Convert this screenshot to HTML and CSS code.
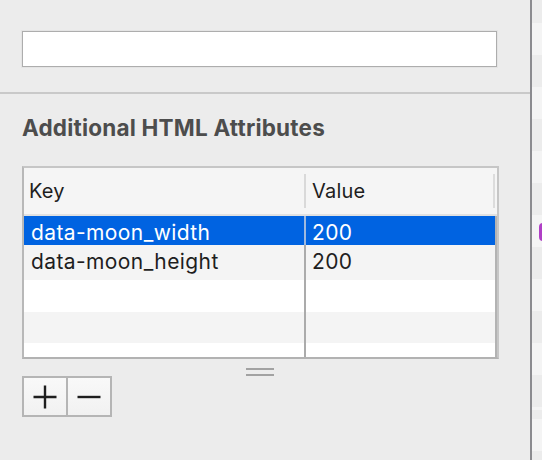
FILE: index.html
```html
<!DOCTYPE html>
<html>
<head>
<meta charset="utf-8">
<link rel="stylesheet" href="styles.css">
</head>
<body>
<div class="app">
  <div class="panel">
    <section class="top">
      <div class="field"></div>
    </section>
    <section class="attrs">
      <h2 class="title">Additional HTML Attributes</h2>
      <div class="table">
        <div class="thead">
          <div class="th key">Key</div>
          <div class="th val">Value</div>
          <div class="th-end"></div>
        </div>
        <div class="tbody">
          <div class="row r1 selected"><div class="cell key">data-moon_width</div><div class="cell val">200</div></div>
          <div class="row r2 alt"><div class="cell key">data-moon_height</div><div class="cell val">200</div></div>
          <div class="row r3"><div class="cell key"></div><div class="cell val"></div></div>
          <div class="row r4 alt"><div class="cell key"></div><div class="cell val"></div></div>
          <div class="row r5"><div class="cell key"></div><div class="cell val"></div></div>
        </div>
      </div>
      <div class="handle"><span></span><span></span></div>
      <div class="seg">
        <div class="btn">
          <svg width="24" height="24" viewBox="0 0 24 24"><path d="M12 0.5V23.5M0.5 12H23.5" stroke="#1e1e1e" stroke-width="2.4" fill="none"/></svg>
        </div>
        <div class="btn">
          <svg width="24" height="24" viewBox="0 0 24 24"><path d="M0.5 12H23.5" stroke="#1e1e1e" stroke-width="2.4" fill="none"/></svg>
        </div>
      </div>
    </section>
  </div>
  <div class="vline"></div>
  <div class="strip"><div class="badge"></div></div>
</div>
</body>
</html>
```

FILE: styles.css
```css
html, body {
  margin: 0;
  padding: 0;
  background: #ececec;
}
body {
  font-family: Inter, "Liberation Sans", sans-serif;
  width: 542px;
  height: 460px;
  overflow: hidden;
}
.app {
  display: flex;
  height: 460px;
}
.panel {
  width: 530px;
  flex: none;
}
.top {
  border-bottom: 2px solid #c9c9c9;
  padding: 31px 0 0 22px;
  box-sizing: border-box;
  height: 94px;
}
.field {
  width: 475px;
  height: 36px;
  box-sizing: border-box;
  background: #fff;
  border: 1px solid #adadad;
  box-shadow: 0 0 0 1px #e4e4e4;
}
.attrs {
  padding: 21px 0 0 22px;
}
.title {
  margin: 0;
  font-size: 22.5px;
  letter-spacing: 0.2px;
  line-height: 26px;
  font-weight: 700;
  color: #4d4d4d;
}
.table {
  margin-top: 25px;
  width: 477px;
  height: 193px;
  box-sizing: border-box;
  border: 2px solid #c6c6c6;
  border-bottom-color: #b2b2b2;
  border-left-color: #b8b8b8;
  display: flex;
  flex-direction: column;
  background: #f0f0f0;
}
.thead {
  height: 46px;
  flex: none;
  display: flex;
  background: #f5f5f5;
  border-bottom: 2px solid #e1e1e1;
  font-size: 20px;
  letter-spacing: 0.2px;
  color: #1e1e1e;
  line-height: 46px;
}
.th.key {
  width: 280px;
  padding-left: 5px;
  box-sizing: border-box;
}
.th.val {
  width: 191px;
  padding-left: 6px;
  box-sizing: border-box;
  border-left: 2px solid #d9d9d9;
  border-right: 2px solid #dcdcdc;
  height: 34px;
  margin-top: 6px;
  line-height: 34px;
}
.tbody {
  flex: 1;
  width: 471px;
  border-right: 2px solid #b3b3b3;
  overflow: hidden;
  background: #fff;
}
.row {
  display: flex;
  font-size: 21px;
  letter-spacing: 0.4px;
  color: #1e1e1e;
  background: #fff;
}
.row.alt {
  background: #f4f4f4;
}
.row.selected {
  background: #0063e1;
  color: #fff;
}
.r1 { height: 29px; line-height: 33px; }
.r2 { height: 35px; line-height: 34px; }
.r3 { height: 32px; }
.r4 { height: 31px; }
.r5 { height: 20px; }
.cell.key {
  width: 280px;
  padding-left: 7px;
  box-sizing: border-box;
  white-space: nowrap;
}
.cell.val {
  flex: 1;
  padding-left: 6px;
  border-left: 2px solid #ababab;
  white-space: nowrap;
}
.row.selected .cell.val {
  border-left-color: #9fb9de;
}
.handle {
  width: 28px;
  height: 8px;
  margin: 9px 0 0 224px;
  display: flex;
  flex-direction: column;
  justify-content: space-between;
}
.handle span {
  display: block;
  height: 2px;
  background: #a2a2a2;
}
.seg {
  display: flex;
  width: 90px;
  height: 41px;
  box-sizing: border-box;
  border: 2px solid #b5b5b5;
  background: #f6f6f6;
}
.btn {
  flex: 1;
  display: flex;
  align-items: center;
  justify-content: center;
  background: linear-gradient(#f9f9f9, #f1f1f1);
}
.btn + .btn {
  border-left: 2px solid #b5b5b5;
}
.btn svg {
  display: block;
  margin-top: 1px;
}
.vline {
  width: 2px;
  flex: none;
  background: #8b8b8f;
}
.strip {
  flex: 1;
  position: relative;
  background: repeating-linear-gradient(to bottom, #ececec 0px, #ececec 9px, #f4f4f4 9px, #f4f4f4 41px, #ececec 41px, #ececec 64px);
  background-position: 0 -50px;
}
.badge {
  position: absolute;
  left: 7px;
  top: 223px;
  width: 8px;
  height: 18px;
  border-radius: 4px;
  background: #b03fc6;
}
```
